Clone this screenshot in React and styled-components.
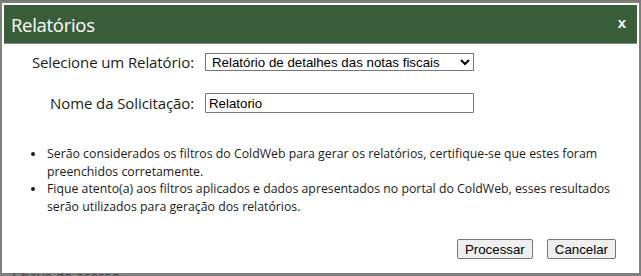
import styled, { createGlobalStyle } from "styled-components";

const GlobalStyle = createGlobalStyle`
  html, body {
    margin: 0;
    padding: 0;
    background: #7f7f7f;
    overflow: hidden;
  }
  body {
    font-family: "Open Sans", "Noto Sans", sans-serif;
    color: #1b1b1b;
  }
`;

const Page = styled.div`
  width: 641px;
  height: 276px;
  padding: 2px 2px 0 2px;
  box-sizing: border-box;
  border-top: 1px solid #7c786a;
`;

const Dialog = styled.div`
  position: relative;
  z-index: 1;
  width: 637px;
  height: 270px;
  box-sizing: border-box;
  background: #fff;
  padding: 2px;
  display: flex;
  flex-direction: column;
`;

const Header = styled.div`
  height: 38px;
  background: #3b5e3a;
  border-bottom: 1px solid #7d8c7c;
  display: flex;
  align-items: center;
  justify-content: space-between;
  padding: 0 11px 0 7px;
`;

const Title = styled.span`
  color: #fff;
  font-size: 18.5px;
  letter-spacing: -0.3px;
`;

const Close = styled.span`
  color: #fff;
  font-family: "Liberation Sans", Arial, sans-serif;
  font-weight: bold;
  font-size: 15px;
  line-height: 1;
  margin-top: -3px;
`;

const Form = styled.div`
  display: grid;
  grid-template-columns: 190px 269px;
  column-gap: 11px;
  row-gap: 21px;
  padding: 8px 0 0 0;
  align-items: center;
`;

const Label = styled.label`
  text-align: right;
  font-size: 15px;
  letter-spacing: -0.1px;
  color: #1b1b1b;
`;

const Select = styled.select`
  height: 18px;
  width: 269px;
  box-sizing: border-box;
  font-family: "Liberation Sans", Arial, sans-serif;
  font-size: 13.3px;
  border: 1px solid #767676;
  border-radius: 0;
  padding: 0 0 0 2px;
  background: #fff;
  color: #000;
`;

const Input = styled.input`
  height: 20px;
  width: 269px;
  box-sizing: border-box;
  font-family: "Liberation Sans", Arial, sans-serif;
  font-size: 13.3px;
  border: 1px solid #767676;
  border-radius: 1px;
  padding: 0 3px;
  color: #000;
`;

const Notes = styled.ul`
  margin: 32px 0 0 0;
  padding: 0 20px 0 42px;
  font-size: 12.3px;
  line-height: 17.5px;
  color: #1b1b1b;
`;

const Note = styled.li`
  padding-left: 1px;
`;

const Actions = styled.div`
  margin-top: auto;
  display: flex;
  justify-content: flex-end;
  gap: 14px;
  padding: 0 21px 12px 0;
`;

const Button = styled.button`
  height: 20px;
  font-family: "Liberation Sans", Arial, sans-serif;
  font-size: 13.3px;
  color: #000;
  background: #efefef;
  border: 1px solid #767676;
  border-radius: 2px;
  padding: 0 7px;
`;

const Behind = styled.div`
  margin: -6px 0 0 10px;
  font-size: 14px;
  line-height: 20px;
  color: #1b1b1b;
  opacity: 0.6;
`;

const App = () => {
  return (
    <Page>
      <GlobalStyle />
      <Dialog>
        <Header>
          <Title>Relatórios</Title>
          <Close>x</Close>
        </Header>
        <Form>
          <Label>Selecione um Relatório:</Label>
          <Select defaultValue="notas">
            <option value="notas">Relatório de detalhes das notas fiscais</option>
          </Select>
          <Label>Nome da Solicitação:</Label>
          <Input defaultValue="Relatorio" />
        </Form>
        <Notes>
          <Note>
            Serão considerados os filtros do ColdWeb para gerar os relatórios,
            certifique-se que estes foram preenchidos corretamente.
          </Note>
          <Note>
            Fique atento(a) aos filtros aplicados e dados apresentados no portal
            do ColdWeb, esses resultados serão utilizados para geração dos
            relatórios.
          </Note>
        </Notes>
        <Actions>
          <Button>Processar</Button>
          <Button>Cancelar</Button>
        </Actions>
      </Dialog>
      <Behind>Chave de acesso</Behind>
    </Page>
  );
};

export default App;
